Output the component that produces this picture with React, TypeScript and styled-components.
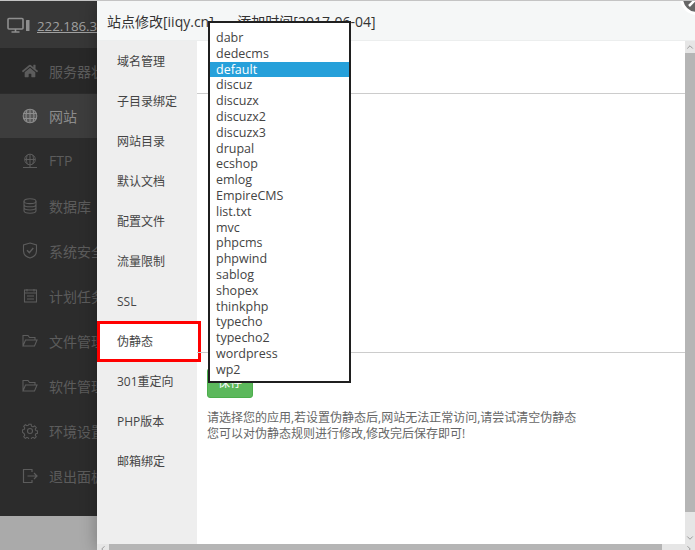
import React from "react";
import styled, { createGlobalStyle } from "styled-components";
import { FaHome } from "react-icons/fa";
import { ChevronUp, ChevronDown, ChevronLeft, ChevronRight } from "lucide-react";

const Global = createGlobalStyle`
  html, body { margin: 0; padding: 0; height: 100%; overflow: hidden; }
  body { font-family: "Open Sans", "Noto Sans CJK SC", sans-serif; background: #a9a9a9; }
  #root { width: 695px; height: 550px; }
`;

const Page = styled.div`
  position: relative;
  width: 695px;
  height: 550px;
  box-sizing: border-box;
  border-top: 1px solid #c4c4c4;
  overflow: hidden;
  background: #aaaaaa;
`;

const Nav = styled.nav`
  width: 97px;
  height: 515px;
  background: #2c2c2c;
  display: flex;
  flex-direction: column;
  overflow: hidden;
`;

const NavHead = styled.div`
  height: 47px;
  flex: none;
  box-sizing: border-box;
  background: #373737;
  padding: 15px 0 0 7px;
  display: flex;
  align-items: flex-start;
  color: #8f8f8f;
  white-space: nowrap;
  svg { flex: none; }
`;

const HeadIp = styled.span`
  font-size: 13.3px;
  line-height: 20px;
  margin-left: 6px;
  text-decoration: underline;
  color: #a0a0a0;
`;

const NavRow = styled.div<{ $tone?: "active" | "dark" }>`
  height: ${(p) => (p.$tone === "active" ? "44px" : "45px")};
  margin-top: ${(p) => (p.$tone === "active" ? "1px" : "0")};
  flex: none;
  box-sizing: border-box;
  display: flex;
  align-items: center;
  white-space: nowrap;
  color: ${(p) => (p.$tone === "active" ? "#8c8c8c" : "#5c5c5c")};
  background: ${(p) =>
    p.$tone === "active" ? "#3d3d3d" : p.$tone === "dark" ? "#282828" : "transparent"};
  font-size: 14px;
`;

const NavIcon = styled.span`
  width: 49px;
  flex: none;
  display: flex;
  justify-content: center;
  padding-left: 11px;
  box-sizing: border-box;
`;

const Modal = styled.section`
  position: absolute;
  left: 97px;
  top: 0;
  width: 598px;
  height: 549px;
  background: #fff;
  box-shadow: 0 0 16px rgba(0, 0, 0, 0.3);
  display: grid;
  grid-template-columns: 100px 1fr;
  grid-template-rows: 40px 1fr;
`;

const Title = styled.header`
  grid-column: 1 / 3;
  background: #f5f7f7;
  border-bottom: 1px solid #eceeee;
  box-sizing: border-box;
  font-size: 14px;
  line-height: 20px;
  padding: 11px 0 0 10px;
  color: #333;
  white-space: pre;
`;

const CloseIcon = styled.div`
  position: absolute;
  left: 583px;
  top: -20px;
  width: 28px;
  height: 28px;
  border-radius: 50%;
  background: #666;
  border: 3px solid #fff;
  box-sizing: content-box;
  svg { display: block; }
`;

const Side = styled.aside`
  background: #eeeeee;
  display: flex;
  flex-direction: column;
`;

const Tab = styled.div`
  height: 40px;
  flex: none;
  font-size: 12px;
  line-height: 42px;
  padding-left: 20px;
  color: #444;
`;

const ActiveTab = styled(Tab)`
  background: #fff;
  position: relative;
  &::after {
    content: "";
    position: absolute;
    left: 0;
    top: 0;
    width: 104px;
    height: 41px;
    box-sizing: border-box;
    border: 3px solid #f00;
  }
`;

const Body = styled.main`
  position: relative;
  overflow: hidden;
  display: flex;
  flex-direction: column;
`;

const SelectBox = styled.div`
  height: 52px;
  flex: none;
  border-bottom: 1px solid #ccc;
  margin-right: 10px;
`;

const Rules = styled.div`
  height: 258px;
  flex: none;
  border-bottom: 1px solid #ccc;
  margin-right: 10px;
`;

const SaveBtn = styled.button`
  margin: 15px 0 0 10px;
  width: 46px;
  height: 30px;
  flex: none;
  border: 1px solid #4cae4c;
  border-radius: 3px;
  background: #5cb85c;
  color: #fff;
  font: 12px "Open Sans", "Noto Sans CJK SC", sans-serif;
  padding: 0 0 2px;
`;

const Help = styled.p`
  margin: 12px 0 0 10px;
  font-size: 12px;
  line-height: 16px;
  color: #666;
`;

const ScrollY = styled.div`
  position: absolute;
  right: 0;
  top: 0;
  bottom: 6px;
  width: 10px;
  background: #e6e6e6;
  display: flex;
  flex-direction: column;
  justify-content: space-between;
`;

const ScrollCap = styled.div`
  height: 12px;
  flex: none;
  color: #8a8a8a;
  display: flex;
  align-items: center;
  justify-content: center;
  overflow: hidden;
`;

const ThumbY = styled.div`
  height: 459px;
  background: #b5b5b5;
  flex: none;
`;

const ScrollX = styled.div`
  position: absolute;
  left: 0;
  right: 0;
  bottom: 0;
  height: 6px;
  background: #e6e6e6;
  display: flex;
  align-items: stretch;
  justify-content: space-between;
`;

const XCap = styled.div`
  width: 12px;
  flex: none;
  color: #8a8a8a;
  display: flex;
  align-items: flex-start;
  justify-content: center;
  overflow: hidden;
`;

const ThumbX = styled.div`
  width: 553px;
  flex: none;
  margin-right: 21px;
  background: #b5b5b5;
`;

const Menu = styled.ul`
  position: absolute;
  left: 208px;
  top: 20px;
  width: 143px;
  height: 362px;
  box-sizing: border-box;
  margin: 0;
  padding: 7px 0 0;
  list-style: none;
  background: #fff;
  border: 2px solid #1f1f1f;
  font-size: 12.5px;
  line-height: 15.8px;
  color: #444;
`;

const MenuItem = styled.li<{ $on?: boolean }>`
  height: 15.8px;
  padding-left: 6px;
  background: ${(p) => (p.$on ? "#26a0da" : "transparent")};
  color: ${(p) => (p.$on ? "#fff" : "#444")};
`;

const items = ["dabr","dedecms","default","discuz","discuzx","discuzx2","discuzx3","drupal","ecshop","emlog","EmpireCMS","list.txt","mvc","phpcms","phpwind","sablog","shopex","thinkphp","typecho","typecho2","wordpress","wp2"];
const tabs = ["域名管理","子目录绑定","网站目录","默认文档","配置文件","流量限制","SSL","伪静态","301重定向","PHP版本","邮箱绑定"];

const Monitor = () => (
  <svg width="24" height="20" viewBox="0 0 24 20" fill="none" stroke="currentColor" strokeWidth="1.6">
    <rect x="1" y="2.5" width="15" height="10.5" rx="1" />
    <path d="M8.5 13v2.5M4.5 16h8" />
    <rect x="19" y="4" width="3.5" height="11" rx="0.5" fill="currentColor" stroke="none" />
  </svg>
);

const GlobeIcon = () => (
  <svg width="16" height="16" viewBox="0 0 16 16" fill="none" stroke="currentColor" strokeWidth="1.1">
    <circle cx="8" cy="8" r="6.8" fill="currentColor" fillOpacity="0.35" />
    <path d="M1.2 5.5h13.6M1.2 10.5h13.6M8 1.2v13.6M4.8 2c-1 3.8-1 8.2 0 12M11.2 2c1 3.8 1 8.2 0 12" />
  </svg>
);

const FtpIcon = () => (
  <svg width="16" height="16" viewBox="0 0 16 16" fill="none" stroke="currentColor" strokeWidth="1">
    <circle cx="8" cy="6.5" r="5.3" />
    <path d="M2.7 6.5h10.6M8 1.2v10.6M5.2 2c-.9 3-.9 6 0 9M10.8 2c.9 3 .9 6 0 9M1 14.5h14M8 11.8v2.7" />
  </svg>
);

const DbIcon = () => (
  <svg width="16" height="16" viewBox="0 0 16 16" fill="none" stroke="currentColor" strokeWidth="1.1">
    <ellipse cx="8" cy="3.2" rx="6" ry="2.4" />
    <path d="M2 3.2v9.6c0 1.3 2.7 2.4 6 2.4s6-1.1 6-2.4V3.2M2 6.4c0 1.3 2.7 2.4 6 2.4s6-1.1 6-2.4M2 9.6c0 1.3 2.7 2.4 6 2.4s6-1.1 6-2.4" />
  </svg>
);

const ShieldIcon = () => (
  <svg width="16" height="17" viewBox="0 0 16 17" fill="none" stroke="currentColor" strokeWidth="1.1">
    <path d="M8 1l6.5 2v6c0 3.6-3 6-6.5 7C4.5 15 1.5 12.6 1.5 9V3z" />
    <path d="M5 8.3l2.3 2.3L11.3 6" strokeWidth="1.4" />
  </svg>
);

const CalIcon = () => (
  <svg width="15" height="15" viewBox="0 0 15 15" fill="none" stroke="currentColor" strokeWidth="1.1">
    <rect x="1.5" y="2" width="12" height="12" />
    <path d="M1.5 5h12M4 1v2.5M11 1v2.5M4 8h7M4 11h7" />
  </svg>
);

const FolderIcon = () => (
  <svg width="16" height="15" viewBox="0 0 16 15" fill="none" stroke="currentColor" strokeWidth="1.1">
    <path d="M1 13V2.5h5l1.5 2H13V7M1 13h11.5L15 7H3.5z" />
  </svg>
);

const GearIcon = () => (
  <svg width="16" height="16" viewBox="0 0 16 16" fill="none" stroke="currentColor" strokeWidth="1.1">
    <circle cx="8" cy="8" r="2.5" />
    <path d="M6.8 1h2.400l.4 2 1.600.7 1.700-1.100 1.700 1.700-1.100 1.700.7 1.600 1.800.4v2.400l-1.800.4-.7 1.600 1.100 1.700-1.700 1.700-1.700-1.100-1.600.7-.4 1.800H6.800l-.4-1.800-1.600-.7-1.700 1.100-1.700-1.700 1.100-1.700-.7-1.600L0 9.200V6.800l1.800-.4.7-1.600-1.100-1.700 1.700-1.700 1.700 1.100 1.600-.7z" transform="translate(.4 .4) scale(.95)" />
  </svg>
);

const ExitIcon = () => (
  <svg width="16" height="16" viewBox="0 0 16 16" fill="none" stroke="currentColor" strokeWidth="1.2">
    <path d="M10 4V1.5H1.500v13H10V12M5.500 8H15M12 5l3 3-3 3" />
  </svg>
);

type NavEntry = { icon: React.ReactNode; label: string; tone?: "active" | "dark" };

const nav: NavEntry[] = [
  { icon: <FaHome size={16} />, label: "服务器状态", tone: "dark" },
  { icon: <GlobeIcon />, label: "网站", tone: "active" },
  { icon: <FtpIcon />, label: "FTP" },
  { icon: <DbIcon />, label: "数据库" },
  { icon: <ShieldIcon />, label: "系统安全" },
  { icon: <CalIcon />, label: "计划任务" },
  { icon: <FolderIcon />, label: "文件管理" },
  { icon: <FolderIcon />, label: "软件管理" },
  { icon: <GearIcon />, label: "环境设置" },
  { icon: <ExitIcon />, label: "退出面板" },
];

export default function App() {
  return (
    <Page>
      <Global />
      <Nav>
        <NavHead>
          <Monitor />
          <HeadIp>222.186.36.10</HeadIp>
        </NavHead>
        {nav.map((n) => (
          <NavRow key={n.label} $tone={n.tone}>
            <NavIcon>{n.icon}</NavIcon>
            <span>{n.label}</span>
          </NavRow>
        ))}
      </Nav>
      <Modal>
        <Title>站点修改[iiqy.cn]  --  添加时间[2017-06-04]</Title>
        <CloseIcon>
          <svg width="28" height="28" viewBox="0 0 28 28" stroke="#fff" strokeWidth="2.5">
            <path d="M6 22L22 6M6 6l16 16" />
          </svg>
        </CloseIcon>
        <Side>
          {tabs.map((t) =>
            t === "伪静态" ? <ActiveTab key={t}>{t}</ActiveTab> : <Tab key={t}>{t}</Tab>
          )}
        </Side>
        <Body>
          <SelectBox />
          <Rules />
          <SaveBtn>保存</SaveBtn>
          <Help>
            请选择您的应用,若设置伪静态后,网站无法正常访问,请尝试清空伪静态
            <br />
            您可以对伪静态规则进行修改,修改完后保存即可!
          </Help>
          <ScrollY>
            <div>
              <ScrollCap>
                <ChevronUp size={10} strokeWidth={2} />
              </ScrollCap>
              <ThumbY />
            </div>
            <ScrollCap>
              <ChevronDown size={10} strokeWidth={2} />
            </ScrollCap>
          </ScrollY>
        </Body>
        <ScrollX>
          <XCap>
            <ChevronLeft size={10} strokeWidth={2} />
          </XCap>
          <ThumbX />
          <XCap>
            <ChevronRight size={10} strokeWidth={2} />
          </XCap>
        </ScrollX>
      </Modal>
      <Menu>
        {items.map((i) => (
          <MenuItem key={i} $on={i === "default"}>{i}</MenuItem>
        ))}
      </Menu>
    </Page>
  );
}
